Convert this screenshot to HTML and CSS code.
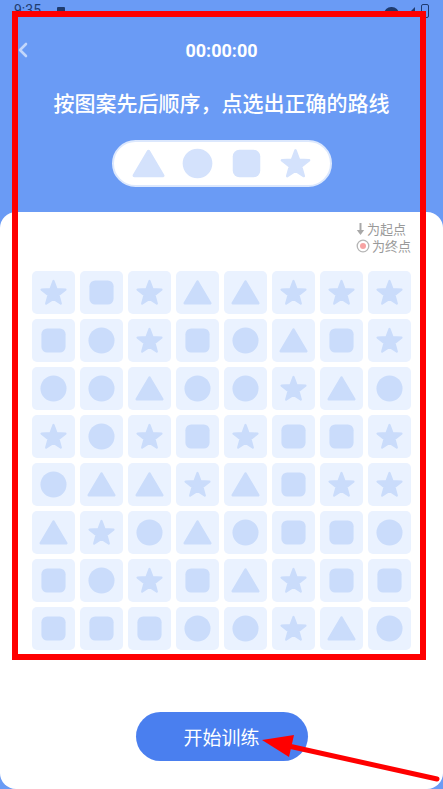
FILE: index.html
```html
<!DOCTYPE html>
<html lang="zh">
<head>
    <meta charset="UTF-8">
    <meta name="viewport" content="width=device-width, initial-scale=1.0">
    <title>路线训练</title>
    <link rel="stylesheet" href="styles.css">
</head>
<body>
    <svg width="0" height="0" class="defs">
        <symbol id="tri" viewBox="0 0 30 30">
            <path d="M15 4 L28 26 H2 Z" stroke="currentColor" stroke-width="3" stroke-linejoin="round"/>
        </symbol>
        <symbol id="circle" viewBox="0 0 30 30">
            <circle cx="15" cy="15" r="13.5"/>
        </symbol>
        <symbol id="square" viewBox="0 0 30 30">
            <rect x="2.5" y="2.5" width="25" height="25" rx="6"/>
        </symbol>
        <symbol id="star" viewBox="0 0 30 30">
            <path d="M15 3 L18.2 11.5 L27.4 12 L20.2 17.7 L22.6 26.5 L15 21.5 L7.4 26.5 L9.8 17.7 L2.6 12 L11.8 11.5 Z" stroke="currentColor" stroke-width="2.2" stroke-linejoin="round"/>
        </symbol>
    </svg>

    <div class="status">
        <span class="clock">9:35</span>
        <span class="note"></span>
        <span class="spacer"></span>
        <span class="wifi"></span>
        <span class="signal"></span>
        <span class="battery"></span>
    </div>

    <div class="topbar">
        <svg class="back" width="12" height="16" viewBox="0 0 12 16"><polyline points="9,2 3,8 9,14" fill="none" stroke="currentColor" stroke-width="2.6" stroke-linecap="round" stroke-linejoin="round"/></svg>
        <div class="timer">00:00:00</div>
    </div>

    <div class="title">按图案先后顺序，点选出正确的路线</div>

    <div class="pill">
        <svg class="pill-shape"><use href="#tri"/></svg>
        <svg class="pill-shape"><use href="#circle"/></svg>
        <svg class="pill-shape"><use href="#square"/></svg>
        <svg class="pill-shape"><use href="#star"/></svg>
    </div>

    <div class="card">
        <div class="legend">
            <div class="legend-row">
                <svg width="9" height="14" viewBox="0 0 9 14"><path d="M4.5 1 V9" stroke="#a8a8a8" stroke-width="2"/><path d="M0.8 8 H8.2 L4.5 13 Z" fill="#a8a8a8"/></svg>
                为起点
            </div>
            <div class="legend-row">
                <svg width="14" height="14" viewBox="0 0 14 14"><circle cx="7" cy="7" r="5.8" fill="none" stroke="#b5b5b5" stroke-width="1.3"/><circle cx="7" cy="7" r="3" fill="#f7a3a3"/></svg>
                为终点
            </div>
        </div>

        <div class="grid">
            <div class="cell"><svg><use href="#star"/></svg></div>
            <div class="cell"><svg><use href="#square"/></svg></div>
            <div class="cell"><svg><use href="#star"/></svg></div>
            <div class="cell"><svg><use href="#tri"/></svg></div>
            <div class="cell"><svg><use href="#tri"/></svg></div>
            <div class="cell"><svg><use href="#star"/></svg></div>
            <div class="cell"><svg><use href="#star"/></svg></div>
            <div class="cell"><svg><use href="#star"/></svg></div>

            <div class="cell"><svg><use href="#square"/></svg></div>
            <div class="cell"><svg><use href="#circle"/></svg></div>
            <div class="cell"><svg><use href="#star"/></svg></div>
            <div class="cell"><svg><use href="#square"/></svg></div>
            <div class="cell"><svg><use href="#circle"/></svg></div>
            <div class="cell"><svg><use href="#tri"/></svg></div>
            <div class="cell"><svg><use href="#square"/></svg></div>
            <div class="cell"><svg><use href="#star"/></svg></div>

            <div class="cell"><svg><use href="#circle"/></svg></div>
            <div class="cell"><svg><use href="#circle"/></svg></div>
            <div class="cell"><svg><use href="#tri"/></svg></div>
            <div class="cell"><svg><use href="#circle"/></svg></div>
            <div class="cell"><svg><use href="#circle"/></svg></div>
            <div class="cell"><svg><use href="#star"/></svg></div>
            <div class="cell"><svg><use href="#tri"/></svg></div>
            <div class="cell"><svg><use href="#circle"/></svg></div>

            <div class="cell"><svg><use href="#star"/></svg></div>
            <div class="cell"><svg><use href="#circle"/></svg></div>
            <div class="cell"><svg><use href="#star"/></svg></div>
            <div class="cell"><svg><use href="#square"/></svg></div>
            <div class="cell"><svg><use href="#star"/></svg></div>
            <div class="cell"><svg><use href="#square"/></svg></div>
            <div class="cell"><svg><use href="#square"/></svg></div>
            <div class="cell"><svg><use href="#star"/></svg></div>

            <div class="cell"><svg><use href="#circle"/></svg></div>
            <div class="cell"><svg><use href="#tri"/></svg></div>
            <div class="cell"><svg><use href="#tri"/></svg></div>
            <div class="cell"><svg><use href="#star"/></svg></div>
            <div class="cell"><svg><use href="#tri"/></svg></div>
            <div class="cell"><svg><use href="#square"/></svg></div>
            <div class="cell"><svg><use href="#star"/></svg></div>
            <div class="cell"><svg><use href="#star"/></svg></div>

            <div class="cell"><svg><use href="#tri"/></svg></div>
            <div class="cell"><svg><use href="#star"/></svg></div>
            <div class="cell"><svg><use href="#circle"/></svg></div>
            <div class="cell"><svg><use href="#tri"/></svg></div>
            <div class="cell"><svg><use href="#circle"/></svg></div>
            <div class="cell"><svg><use href="#square"/></svg></div>
            <div class="cell"><svg><use href="#square"/></svg></div>
            <div class="cell"><svg><use href="#circle"/></svg></div>

            <div class="cell"><svg><use href="#square"/></svg></div>
            <div class="cell"><svg><use href="#circle"/></svg></div>
            <div class="cell"><svg><use href="#star"/></svg></div>
            <div class="cell"><svg><use href="#square"/></svg></div>
            <div class="cell"><svg><use href="#tri"/></svg></div>
            <div class="cell"><svg><use href="#star"/></svg></div>
            <div class="cell"><svg><use href="#square"/></svg></div>
            <div class="cell"><svg><use href="#square"/></svg></div>

            <div class="cell"><svg><use href="#square"/></svg></div>
            <div class="cell"><svg><use href="#square"/></svg></div>
            <div class="cell"><svg><use href="#square"/></svg></div>
            <div class="cell"><svg><use href="#circle"/></svg></div>
            <div class="cell"><svg><use href="#circle"/></svg></div>
            <div class="cell"><svg><use href="#star"/></svg></div>
            <div class="cell"><svg><use href="#tri"/></svg></div>
            <div class="cell"><svg><use href="#circle"/></svg></div>
        </div>

        <button class="start">开始训练</button>
    </div>

    <!-- annotation drawn over the screenshot -->
    <div class="mark-box"></div>
    <svg class="mark-arrow" width="443" height="789" viewBox="0 0 443 789">
        <line x1="437" y1="779" x2="284" y2="745" stroke="#ff0000" stroke-width="5" stroke-linecap="round"/>
        <polygon points="262,740 294,735 289,757" fill="#ff0000"/>
    </svg>
</body>
</html>
```

FILE: styles.css
```css
body {
    margin: 0;
    width: 443px;
    height: 789px;
    overflow: hidden;
    background-color: #6a9bf5;
    font-family: "Noto Sans CJK SC", "Noto Sans", sans-serif;
    display: flex;
    flex-direction: column;
    position: relative;
}

.defs {
    position: absolute;
}

.status {
    height: 24px;
    display: flex;
    align-items: flex-start;
    padding: 0 14px;
    color: #1f3b6e;
    font-family: Roboto, sans-serif;
    font-size: 14px;
    line-height: 20px;
    box-sizing: border-box;
}

.note {
    width: 8px;
    height: 9px;
    background-color: #1f3b6e;
    margin: 7px 0 0 16px;
    border-radius: 1px;
}

.spacer {
    flex: 1;
}

.wifi {
    width: 15px;
    height: 9px;
    background-color: #1f3b6e;
    border-radius: 8px 8px 2px 2px;
    margin: 7px 6px 0 0;
}

.signal {
    width: 0;
    height: 0;
    border-left: 10px solid transparent;
    border-bottom: 10px solid #1f3b6e;
    margin: 7px 6px 0 0;
}

.battery {
    width: 6px;
    height: 12px;
    border: 1.5px solid #1f3b6e;
    border-radius: 2px;
    margin-top: 4px;
}

.topbar {
    height: 52px;
    display: flex;
    align-items: center;
    justify-content: center;
    position: relative;
}

.back {
    position: absolute;
    left: 17px;
    top: 18px;
    color: rgba(255, 255, 255, 0.6);
}

.timer {
    color: white;
    font-family: Roboto, sans-serif;
    font-weight: bold;
    font-size: 18px;
}

.title {
    margin-top: 12px;
    color: white;
    text-align: center;
    font-size: 21px;
    line-height: 29px;
    font-weight: 500;
}

.pill {
    align-self: center;
    margin-top: 23px;
    width: 220px;
    height: 47px;
    box-sizing: border-box;
    background-color: white;
    border: 2px solid #dce8fd;
    border-radius: 24px;
    display: flex;
    align-items: center;
    justify-content: center;
    gap: 16px;
}

.pill-shape {
    width: 33px;
    height: 33px;
    fill: #d4e2fc;
    color: #d4e2fc;
}

.card {
    flex: 1;
    margin-top: 25px;
    background-color: white;
    border-radius: 16px;
    display: flex;
    flex-direction: column;
    align-items: center;
}

.legend {
    align-self: flex-end;
    padding: 8px 32px 0 0;
    color: #999;
    font-size: 13px;
    line-height: 17px;
}

.legend-row {
    display: flex;
    align-items: center;
    gap: 2px;
}

.grid {
    margin-top: 17px;
    display: grid;
    grid-template-columns: repeat(8, 43px);
    grid-auto-rows: 43px;
    gap: 5px;
}

.cell {
    background-color: #eaf2ff;
    border-radius: 5px;
    display: flex;
    align-items: center;
    justify-content: center;
}

.cell svg {
    width: 29px;
    height: 29px;
    fill: #cadcfb;
    color: #cadcfb;
}

.start {
    margin-top: 62px;
    width: 172px;
    height: 49px;
    border: none;
    border-radius: 25px;
    background-color: #4a7fef;
    color: white;
    font-family: "Noto Sans CJK SC", sans-serif;
    font-size: 19px;
}

.mark-box {
    position: absolute;
    left: 12px;
    top: 11px;
    width: 414px;
    height: 649px;
    box-sizing: border-box;
    border: 6px solid #ff0000;
}

.mark-arrow {
    position: absolute;
    left: 0;
    top: 0;
}
```
